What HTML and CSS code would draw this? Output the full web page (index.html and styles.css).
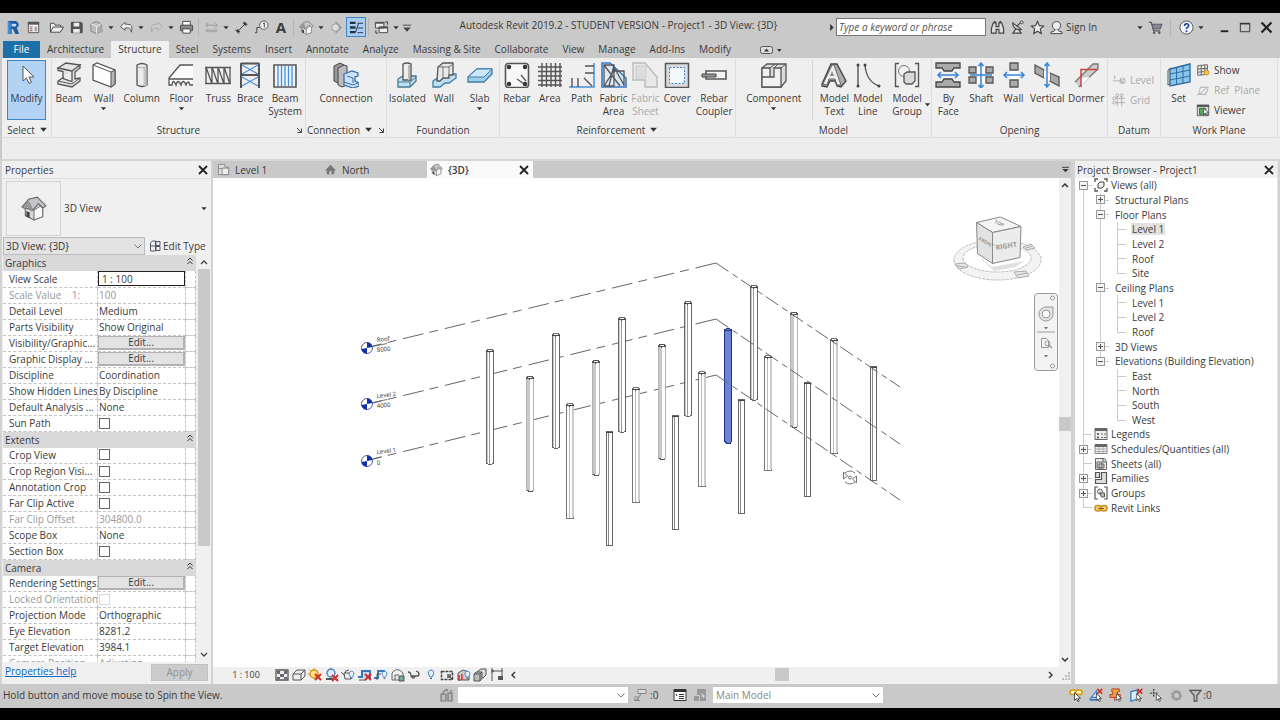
FILE: index.html
```html
<!DOCTYPE html>
<html lang="en">
<head>
<meta charset="utf-8">
<title>Autodesk Revit 2019.2 - STUDENT VERSION - Project1 - 3D View: {3D}</title>
<link rel="stylesheet" href="styles.css">
</head>
<body>
<svg class="defs" aria-hidden="true">
  <defs>
    <symbol id="house" viewBox="0 0 24 24"><path d="M4 12v7l8 4 8-3v-8l-3-5-6-1z" fill="#d8d8dc" stroke="#666" stroke-width="1"/><path d="M12 14l6-4 2 2v8l-8 3z" fill="#f7f7fa" stroke="#777"/><path d="M1 11L7 4l8-2 8 8-3 2-4-4-5 6z" fill="#c4c4ca" stroke="#666"/><path d="M11 14l-4-8-5 6 2 1 2-3 4 5z" fill="#a2a2a8" stroke="#666" stroke-width=".6"/><path d="M5 15l3 1v5l-3-1z" fill="#444"/></symbol>
    <symbol id="caret" viewBox="0 0 8 8"><path d="M1 2.500h6L4 6z" fill="#333"/></symbol>
    <symbol id="chev" viewBox="0 0 10 10"><path d="M1.500 3.500L5 7l3.500-3.500" fill="none" stroke="#777"/></symbol>
    <symbol id="close" viewBox="0 0 12 12"><path d="M2 2l8 8M10 2l-8 8" stroke="#222" stroke-width="1.800"/></symbol>
    <symbol id="launch" viewBox="0 0 8 8"><path d="M2 2l4 4M6.500 2.500v4h-4" fill="none" stroke="#444"/></symbol>
    <symbol id="redx" viewBox="0 0 8 8"><path d="M1 1l6 6M7 1L1 7" stroke="#d22f27" stroke-width="2"/></symbol>
    <symbol id="cursor" viewBox="0 0 10 12"><path d="M1 1v9l2.500-2 1.500 3.500 1.500-.7L5 7.500h3z" fill="#fff" stroke="#333"/></symbol>
    <symbol id="bulb" viewBox="0 0 8 12"><path d="M4 1a3 3 0 0 1 2 5l-1 2H3L2 6a3 3 0 0 1 2-5z" fill="#e8f2fb" stroke="#3b7cc4"/><path d="M3 9.500h2" stroke="#555"/></symbol>
    <symbol id="dbl" viewBox="0 0 8 8"><path d="M1.500 3.500L4 1l2.500 2.500M1.500 7L4 4.500 6.500 7" fill="none" stroke="#333"/></symbol>

    <g id="colA"><path d="M-3.500 1v112l1.500 1h4l1.500-1V1L2-.5h-4z" fill="#fff" stroke="#666"/><path d="M-2.500 2v111" stroke="#ccc"/><path d="M-.5 3v111" stroke="#999"/><path d="M-3.500 1l3 1 4-1" fill="none" stroke="#444"/></g>
    <g id="colB"><path d="M-3.500 1v112l1.500 1h4l1.500-1V1L2-.5h-4z" fill="#fff" stroke="#b4b4b4"/><path d="M-3 2h3v111h-3z" fill="#c8c8c8"/><path d="M-3.500 1L-2-.5h4L3.500 1l-4 1zM-3 113l1.500 1H3" fill="none" stroke="#555"/></g>
    <g id="colC"><path d="M-2.500 1v113h6V1L2 0h-3z" fill="#fff" stroke="#666"/><path d="M-.5 2v112" stroke="#888"/><path d="M-2.500 1l2 1 4-1" fill="none" stroke="#444"/></g>
    <g id="colD"><path d="M-3.500 1v113h7V1L2-.5h-4z" fill="#fff" stroke="#777"/><path d="M-.5 2v112" stroke="#bbb"/><path d="M3 2v111" stroke="#ccc" stroke-width="2"/><path d="M-3.500 1l3 1 4-1" fill="none" stroke="#444"/></g>
    <g id="head"><circle r="5.500" fill="#fff" stroke="#4a62a0"/><path d="M0 0V-5.500A5.500 5.500 0 0 1 5.500-1zM0 0V5.500A5.500 5.500 0 0 1-5.500 1z" fill="#1430a8"/></g>
  </defs>
</svg>

<div class="app">
  <header class="titlebar">
    <nav class="qat" aria-label="Quick access">
      <button class="q" aria-label="Application menu"><svg viewBox="0 0 16 16"><path d="M2 1h8a4 4 0 0 1 1.500 7.500L14 15h-4L7.500 9.500H6V15H2z" fill="#1c5a9c"/><path d="M6 4h3.500a1.300 1.300 0 0 1 0 3H6z" fill="#c8d8ea"/><path d="M2 1l3 2v12H2z" fill="#3e8fd0"/></svg></button>
      <button class="q menu" aria-label="Home"><svg viewBox="0 0 16 16"><path d="M2.500 2.500h11v11h-11z" fill="#f4f4f4" stroke="#555"/><path d="M2 2h12v3H2z" fill="#555"/><path d="M4 7.500h3M4 9.500h3M4 11.500h3" stroke="#8a4a4a"/><path d="M9 7h3v5H9z" fill="#aaa"/></svg></button>
      <button class="q" aria-label="Open"><svg viewBox="0 0 16 16"><path d="M1.500 13V3.500h4l1 2h6v2M1.500 13l3-5.500h11l-3.500 5.500z" fill="#eee" stroke="#444"/></svg></button>
      <button class="q" aria-label="Save"><svg viewBox="0 0 16 16"><path d="M2.500 2.500h10l1.500 1v10H2.500z" fill="#555" stroke="#444"/><path d="M5 3h6v4H5zM4.500 9.500h7v4h-7z" fill="#eee"/></svg></button>
      <button class="q" aria-label="Synchronize"><svg viewBox="0 0 16 16"><path d="M2 4l6-2.500L13 4v7l-5 3.500L2 12z" fill="#bbb" stroke="#888"/><path d="M2 4l6 2.500L13 4M8 6.500v8" fill="none" stroke="#eee"/><circle cx="12" cy="11" r="3" fill="#aaa"/></svg></button>
      <svg class="a"><use href="#caret"/></svg>
      <button class="q" aria-label="Undo"><svg viewBox="0 0 16 16"><path d="M6.500 2.500L1.500 7l5 4V8.500h3.500q3 0 3 4.500 3-8.500-4-8.500H6.500z" fill="#eee" stroke="#555"/></svg></button>
      <svg class="a"><use href="#caret"/></svg>
      <button class="q" aria-label="Redo"><svg viewBox="0 0 16 16"><path d="M9.500 2.500L14.500 7l-5 4V8.500H6q-3 0-3 4.500-3-8.500 4-8.500h2.500z" fill="#ccc" stroke="#aaa"/></svg></button>
      <svg class="a"><use href="#caret"/></svg>
      <button class="q" aria-label="Print"><svg viewBox="0 0 16 16"><path d="M4 6V1.500h8V6" fill="#fff" stroke="#444"/><rect x="1.500" y="5.500" width="13" height="6" rx="1" fill="#888" stroke="#444"/><path d="M4 9.500h8V14H4z" fill="#fff" stroke="#444"/></svg></button>
      <span class="sep"></span>
      <button class="q" aria-label="Measure"><svg viewBox="0 0 16 16"><path d="M2 5.500h12M4 3L2 5.500 4 8M12 3l2 2.500L12 8" fill="none" stroke="#999"/><path d="M2 10h12v3H2z" fill="#aaa"/></svg></button>
      <svg class="a"><use href="#caret"/></svg>
      <button class="q" aria-label="Aligned dimension"><svg viewBox="0 0 16 16"><path d="M3.500 12.500l9-9M1.500 10.500l4 4M10.500 1.500l4 4" stroke="#333"/><path d="M3 9v4h4zM9 3h4v4z" fill="#333"/></svg></button>
      <button class="q" aria-label="Tag"><svg viewBox="0 0 16 16"><circle cx="10.500" cy="5.500" r="4.500" fill="#eee" stroke="#555"/><path d="M9.500 4l1.500-1v5M1 13.500h2V8h3" fill="none" stroke="#444"/></svg></button>
      <button class="q big-a" aria-label="Text">A</button>
      <span class="sep"></span>
      <button class="q" aria-label="Default 3D view"><svg viewBox="0 0 24 24"><use href="#house"/></svg></button>
      <svg class="a"><use href="#caret"/></svg>
      <button class="q" aria-label="Section"><svg viewBox="0 0 16 16"><path d="M7 1l7 7-7 7z" fill="#999"/><circle cx="7" cy="8" r="4" fill="#ddd" stroke="#999"/></svg></button>
      <button class="q on" aria-label="Thin lines"><svg viewBox="0 0 16 16"><path d="M1 3h6M1 8h6M1 13h6" stroke="#234" stroke-width="2.500"/><path d="M9 3.500h6M9 8.500h6M9 13.500h6M7 13l3-9" stroke="#234"/></svg></button>
      <span class="sep"></span>
      <button class="q" aria-label="Switch windows"><svg viewBox="0 0 16 16"><path d="M1.500 2.500h9v6h-9zM5.500 7.500h9v6h-9z" fill="#eee" stroke="#444"/><path d="M1 2h10v2H1zM5 7h10v2H5z" fill="#555"/><path d="M12 2h2.500v3M2 11v3h2" fill="none" stroke="#333"/></svg></button>
      <svg class="a"><use href="#caret"/></svg>
      <button class="q cust" aria-label="Customize"><svg viewBox="0 0 16 16"><path d="M4 5.500h9" stroke="#444"/><path d="M4.500 8h8l-4 4.500z" fill="#444"/></svg></button>
    </nav>
    <h1 class="title">Autodesk Revit 2019.2 - STUDENT VERSION - Project1 - 3D View: {3D}</h1>
    <div class="tools">
      <svg class="a" viewBox="0 0 8 8"><path d="M3 0l4 4-4 4z" fill="#333"/></svg>
      <input class="search" type="text" placeholder="Type a keyword or phrase" aria-label="Search">
      <button class="q" aria-label="Find"><svg viewBox="0 0 16 16"><path d="M3.500 3h3v4h3V3h3l2 6v5h-5v-4h-3v4h-5V9z" fill="#ddd" stroke="#444" stroke-width="1.300"/><path d="M4 1h2v2H4zM10 1h2v2h-2z" fill="#444"/></svg></button>
      <button class="q" aria-label="Communication"><svg viewBox="0 0 16 16"><path d="M3 3c0 6 4 8 9 7zM7 7l4-4M6 10l-3 4h9l-3-4" fill="#ddd" stroke="#444" stroke-width="1.200"/><circle cx="12.500" cy="2.500" r="1.500" fill="#ddd" stroke="#444"/></svg></button>
      <button class="q" aria-label="Favorites"><svg viewBox="0 0 16 16"><path d="M8 1.500l2 4.500 4.500.500-3.500 3 1 5L8 12l-4 2.500 1-5-3.500-3L6 6z" fill="#eee" stroke="#444" stroke-width="1.200"/></svg></button>
      <button class="q signin"><svg viewBox="0 0 16 16"><circle cx="8" cy="6" r="4.300" fill="#eee" stroke="#444"/><path d="M6 10v1.500L2 13v1.500h12V13l-4-1.500V10" fill="#eee" stroke="#444"/></svg>Sign In</button>
      <svg class="a"><use href="#caret"/></svg>
      <button class="q" aria-label="App store"><svg viewBox="0 0 16 16"><path d="M1 2.500h2.500L6 11.500h7" fill="none" stroke="#556" stroke-width="1.300"/><path d="M4 4.500h11L13 9.500H5.500z" fill="#889" stroke="#556"/><circle cx="6.500" cy="13.500" r="1.300" fill="#556"/><circle cx="12" cy="13.500" r="1.300" fill="#556"/></svg></button>
      <span class="sep wide"></span>
      <button class="q" aria-label="Help"><svg viewBox="0 0 16 16"><circle cx="8" cy="8" r="7" fill="#eef1f8" stroke="#555"/><path d="M5.800 6.500q0-2.500 2.300-2.500t2.200 2q0 1-1.300 1.800-1 .6-1 1.700" fill="none" stroke="#1b3f94" stroke-width="1.600"/><circle cx="8" cy="12" r="1" fill="#1b3f94"/></svg></button>
      <svg class="a"><use href="#caret"/></svg>
      <div class="window-buttons">
        <button class="q win" aria-label="Minimize"><svg viewBox="0 0 16 16"><path d="M4 12h8" stroke="#222" stroke-width="2"/></svg></button>
        <button class="q win" aria-label="Maximize"><svg viewBox="0 0 16 16"><path d="M2.500 3.500h10v9h-10z" fill="none" stroke="#333"/><path d="M2 4h11" stroke="#333" stroke-width="1.500"/></svg></button>
        <button class="q win" aria-label="Close"><svg viewBox="0 0 12 12"><use href="#close"/></svg></button>
      </div>
    </div>
  </header>

  <nav class="tabs" aria-label="Ribbon tabs">
    <button class="file">File</button>
    <button>Architecture</button>
    <button class="sel">Structure</button>
    <button>Steel</button>
    <button>Systems</button>
    <button>Insert</button>
    <button>Annotate</button>
    <button>Analyze</button>
    <button>Massing &amp; Site</button>
    <button>Collaborate</button>
    <button>View</button>
    <button>Manage</button>
    <button>Add-Ins</button>
    <button>Modify</button>
    <button class="collapse" aria-label="Minimize ribbon"><svg viewBox="0 0 22 10"><rect x=".5" y="1.500" width="12" height="7" rx="2" fill="#ddd" stroke="#555"/><path d="M4 6.500h5l-2.500-3zM17 4h4.500l-2.200 3z" fill="#333"/></svg></button>
  </nav>

  <div class="ribbon">
    <section class="panel">
      <div class="tools-row c1">
        <button class="rb active"><svg viewBox="0 0 26 26"><path d="M9 4v15l3.500-3 2.500 5.500 2.500-1.200-2.500-5.300h5z" fill="#fff" stroke="#555"/></svg>Modify</button>
      </div>
      <h2>Select <svg><use href="#caret"/></svg></h2>
    </section>

    <section class="panel">
      <div class="tools-row structure">
        <button class="rb"><svg viewBox="0 0 26 26"><path d="M2 6l8-5 14 2-8 6zM2 6v2.500l5 1v7l9 3V9zM16 9l8-6v3l-5 4v7l5-1v3l-8 6-14-3v-3l6-4" fill="#e4e4e4" stroke="#555" stroke-width="1.300"/><path d="M2 19l14 3 8-6" fill="none" stroke="#555"/></svg>Beam</button>
        <button class="rb"><svg viewBox="0 0 26 26"><path d="M2 3l4-2 18 7v14l-4 3-18-7z" fill="#fdfdfd" stroke="#555" stroke-width="1.300"/><path d="M20 10l4-2v14l-4 3z" fill="#b5b5bb" stroke="#555"/><path d="M2 3l18 7" stroke="#555"/></svg>Wall<svg class="dn"><use href="#caret"/></svg></button>
        <button class="rb"><svg viewBox="0 0 26 26"><path d="M8 3q5-3 10 0v20q-5 3-10 0z" fill="#ececec" stroke="#555" stroke-width="1.300"/><path d="M9 5q4 2 8 0" fill="none" stroke="#aaa"/><path d="M14.500 6v18h3V5z" fill="#c4c4c8"/></svg>Column</button>
        <button class="rb"><svg viewBox="0 0 26 26"><path d="M1 17L12 3h13v14l-2 5q-2-6-4 0-2-6-4 0-2-6-4 0-2-6-4 0-2-4-3 0H1z" fill="#fafafa"/><path d="M25 3H12L1 16v7h3q1-7 4 0 2-7 5 0 2-7 5 0 2-6 4 0h3M1 17h24" fill="none" stroke="#555" stroke-width="1.300"/></svg>Floor<svg class="dn"><use href="#caret"/></svg></button>
        <button class="rb"><svg viewBox="0 0 26 26"><path d="M0 5.500h26M0 21.500h26M1 5v17M25 5v17M7 5v17M13 5v17M19 5v17M1 5l6 17M7 5l6 17M13 5l6 17M19 5l6 17" fill="none" stroke="#555" stroke-width="1.300"/></svg>Truss</button>
        <button class="rb"><svg viewBox="0 0 26 26"><path d="M4 1.500h18M4 13h18M4 1v25M22 1v25" stroke="#555" stroke-width="2"/><path d="M5 3l16 9M21 3L5 12M5 15l16 9M21 15L5 24" stroke="#4a90d9" stroke-width="1.300"/></svg>Brace</button>
        <button class="rb"><svg viewBox="0 0 26 26"><path d="M2 3h22v22H2z" fill="#eef5fc" stroke="#555" stroke-width="1.600"/><path d="M6 4v20M9.500 4v20M13 4v20M16.500 4v20M20 4v20" stroke="#4a90d9" stroke-width="1.300"/></svg><span>Beam<br>System</span></button>
      </div>
      <h2>Structure <svg class="corner"><use href="#launch"/></svg></h2>
    </section>

    <section class="panel">
      <div class="tools-row c1">
        <button class="rb"><svg viewBox="0 0 26 26"><path d="M1 4l6-3 4 2v5l-2 1v14l-4-2L1 19z" fill="#999" stroke="#444"/><path d="M5 6l6-3 3 1v19l-5 2-4-2z" fill="#bbb" stroke="#444"/><path d="M11 12l8-3 6 2v3l-3 1v4l4 2v3l-6 2-9-3z" fill="#cfe2f5" stroke="#3a6ea8" stroke-width="1.300"/><path d="M14 14l6 2v5M11 20l9 3 5-2" fill="none" stroke="#3a6ea8"/></svg>Connection</button>
      </div>
      <h2>Connection <svg><use href="#caret"/></svg> <svg class="corner"><use href="#launch"/></svg></h2>
    </section>

    <section class="panel">
      <div class="tools-row foundation">
        <button class="rb"><svg viewBox="0 0 26 26"><path d="M4 17l5-3h13v5l-6 6H4z" fill="#bfe0f3" stroke="#4a7896" stroke-width="1.300"/><path d="M4 20h12l6-5M16 20v5" fill="none" stroke="#4a7896"/><path d="M9 2q4-2 8 0v16H9z" fill="#eee" stroke="#555" stroke-width="1.300"/><path d="M14 3h2v15h-2z" fill="#bbb"/></svg>Isolated</button>
        <button class="rb"><svg viewBox="0 0 26 26"><path d="M2 19l3-2h6l5-5 9 0v4l-7 5h-4l-5 4H2z" fill="#bfe0f3" stroke="#3f7ca6" stroke-width="1.300"/><path d="M7 5l5-4h10v12h-4v3H12l-3 3H6z" fill="#e8e8ea" stroke="#555" stroke-width="1.300"/><path d="M12 4v11M18 4v11M7 5h11l4-3" fill="none" stroke="#777"/></svg>Wall</button>
        <button class="rb"><svg viewBox="0 0 26 26"><path d="M1 15l9-8h15v5l-8 8H1z" fill="#9fcdec" stroke="#3f7ca6" stroke-width="1.300"/><path d="M1 15l9-8h15l-8 8z" fill="#cfe8f8" stroke="#3f7ca6"/></svg>Slab<svg class="dn"><use href="#caret"/></svg></button>
      </div>
      <h2>Foundation</h2>
    </section>

    <section class="panel">
      <div class="tools-row reinforcement">
        <button class="rb"><svg viewBox="0 0 26 26"><rect x="1.500" y="1.500" width="23" height="24" rx="3" fill="#f8f8f8" stroke="#555" stroke-width="1.600"/><g fill="#333"><circle cx="5" cy="5" r="2.200"/><circle cx="21" cy="5" r="2.200"/><circle cx="5" cy="22" r="2.200"/><circle cx="21" cy="22" r="2.200"/></g><path d="M13 17l7 5M17 13l5 6" stroke="#555" stroke-width="1.300"/></svg>Rebar</button>
        <button class="rb"><svg viewBox="0 0 26 26"><path d="M1 5h24M1 9.500h24M1 14h24M1 18.500h24M1 23h24M5 1v24M9.500 1v24M14 1v24M18.500 1v24M23 1v24" stroke="#555" stroke-width="1.400"/></svg>Area</button>
        <button class="rb"><svg viewBox="0 0 26 26"><path d="M0 25h25V1" fill="none" stroke="#4a90d9" stroke-width="1.500"/><path d="M16 4h9M16 11h9M3 16v9M9 16v9M15 16l8 8" stroke="#555" stroke-width="1.400"/></svg>Path</button>
        <button class="rb"><svg viewBox="0 0 26 26"><path d="M1 1h8l16 15v9H1z" fill="#dbe8f6" stroke="#3a7abf" stroke-width="1.600"/><path d="M3 3h10v21H3zM13 9h10v15M3 24L14 7l9 16M3 3l16 21M13 3l-5 21" fill="none" stroke="#555" stroke-width="1.300"/></svg><span>Fabric<br>Area</span></button>
        <button class="rb off" disabled><svg viewBox="0 0 26 26"><path d="M1 1h12l12 14v10H13V18H1z" fill="#e8e8e8" stroke="#bbb" stroke-width="1.400"/><path d="M4 4h10v12H4z" fill="#ddd" stroke="#ccc"/></svg><span>Fabric<br>Sheet</span></button>
        <button class="rb"><svg viewBox="0 0 26 26"><rect x="1.500" y="1.500" width="23" height="24" fill="#dcdcdf" stroke="#555" stroke-width="1.500"/><rect x="5.500" y="5.500" width="15" height="16" fill="#f3f8fd" stroke="#3a86d6" stroke-dasharray="2 1.500"/></svg>Cover</button>
        <button class="rb"><svg viewBox="0 0 26 26"><path d="M5 9h20v8H5z" fill="#f4f4f4" stroke="#555" stroke-width="1.600"/><path d="M1 12h14v3H1z" fill="#999" stroke="#444"/></svg><span>Rebar<br>Coupler</span></button>
      </div>
      <h2>Reinforcement <svg><use href="#caret"/></svg></h2>
    </section>

    <section class="panel">
      <div class="tools-row model">
        <button class="rb ruled"><svg viewBox="0 0 26 26"><path d="M1 6l5-4h19v17l-5 6H1z" fill="#dcdce0" stroke="#555" stroke-width="1.300"/><path d="M1 6h8v9H1zM13 6h7v19H1V15h12z" fill="#f2f2f4" stroke="#555" stroke-width="1.300"/><path d="M9 6l5-4M13 6l4-4M20 6l5-4" stroke="#555"/></svg>Component<svg class="dn"><use href="#caret"/></svg></button>
        <button class="rb text"><svg viewBox="0 0 26 26"><path d="M1 22L10 2h6l9 17-5 6-4-1-2-5H9l-3 6-5-1zM11 14h3l-2-5z" fill="#aaa" stroke="#444" stroke-width="1.300"/><path d="M2 22L11 3h2l7 20h-4l-2-6H8l-2 6z" fill="#eee" stroke="#666"/><path d="M9 14h4l-2-5z" fill="#888"/></svg><span>Model<br>Text</span></button>
        <button class="rb"><svg viewBox="0 0 26 26"><path d="M3 3v21M10 3c1 13 8 19 14 21" fill="none" stroke="#555" stroke-width="1.400"/><g fill="#444"><circle cx="3" cy="3" r="1.500"/><circle cx="3" cy="24" r="1.500"/><circle cx="10" cy="3" r="1.500"/><circle cx="24" cy="24" r="1.500"/></g></svg><span>Model<br>Line</span></button>
        <button class="rb"><svg viewBox="0 0 26 26"><path d="M5 1.500H1.500v23H5M21 1.500h3.500v23H21" fill="none" stroke="#555" stroke-width="1.400"/><circle cx="10" cy="9" r="5.500" fill="#f3f3f3" stroke="#777"/><path d="M10 12l3-2h8v9l-3 3h-6l-2-2z" fill="#d8d8da" stroke="#555" stroke-width="1.300"/></svg><span>Model<br>Group</span><svg class="side"><use href="#caret"/></svg></button>
      </div>
      <h2>Model</h2>
    </section>

    <section class="panel">
      <div class="tools-row opening">
        <button class="rb"><svg viewBox="0 0 26 26"><path d="M1 1h24v5h-6l-2 3H9L7 6H1zM1 25v-5h6l2-3h8l2 3h6v5z" fill="#aaa" stroke="#444" stroke-width="1.300"/><path d="M3 13h20M6 10l-3 3 3 3M20 10l3 3-3 3" fill="none" stroke="#3a86d6" stroke-width="1.500"/></svg><span>By<br>Face</span></button>
        <button class="rb"><svg viewBox="0 0 26 26"><path d="M1 5h7v6H1zM18 5h7v6h-7zM1 15h7v6H1zM18 15h7v6h-7z" fill="#aaa" stroke="#555" stroke-width="1.300"/><path d="M9 5h8v6H9zM9 15h8v6H9z" fill="#fff"/><path d="M13 1v25M2 13h22M10.500 4L13 1l2.500 3M10.500 23l2.500 3 2.500-3" fill="none" stroke="#3a86d6" stroke-width="1.500"/></svg>Shaft</button>
        <button class="rb"><svg viewBox="0 0 26 26"><path d="M9 1h8v7H9zM9 18h8v7H9z" fill="#aaa" stroke="#555" stroke-width="1.300"/><path d="M9 9h8v8H9z" fill="#fff"/><path d="M3 13h20M6 10l-3 3 3 3M20 10l3 3-3 3" fill="none" stroke="#3a86d6" stroke-width="1.500"/></svg>Wall</button>
        <button class="rb"><svg viewBox="0 0 26 26"><path d="M1 3l9 5v8l-9-5zM16 11l9 4v9l-9-5z" fill="#aaa" stroke="#555" stroke-width="1.300"/><path d="M10 8l6 3v8l-6-3z" fill="#fff"/><path d="M13 1v24M10.500 4L13 1l2.500 3M10.500 22l2.500 3 2.500-3" fill="none" stroke="#3a86d6" stroke-width="1.500"/></svg>Vertical</button>
        <button class="rb"><svg viewBox="0 0 26 26"><path d="M2 20L20 2h5v5L6 25" fill="#ccc" stroke="#777" stroke-width="1.300"/><path d="M8 16v8l9-9z" fill="#fff"/><path d="M8 25V7.500h17" fill="none" stroke="#cf4138" stroke-width="1.500"/></svg>Dormer</button>
      </div>
      <h2>Opening</h2>
    </section>

    <section class="panel">
      <div class="stack datum">
        <button class="sm" disabled><svg viewBox="0 0 16 16"><path d="M3 3v4M1 9h9" stroke="#aaa"/><circle cx="12" cy="9" r="3.500" fill="#bbb"/><path d="M12 5.500V9h3.500" stroke="#eee" fill="none"/></svg>Level</button>
        <button class="sm" disabled><svg viewBox="0 0 16 16"><path d="M6 3v12M11 3v12M3 6h12M3 11h12" stroke="#aaa"/><g fill="#eee" stroke="#aaa"><circle cx="6" cy="2.500" r="1.700"/><circle cx="11" cy="2.500" r="1.700"/><circle cx="2.500" cy="6" r="1.700"/><circle cx="2.500" cy="11" r="1.700"/></g></svg>Grid</button>
      </div>
      <h2>Datum</h2>
    </section>

    <section class="panel">
      <div class="tools-row workplane">
        <button class="rb"><svg viewBox="0 0 26 26"><path d="M2 8l3-2v15l-3 2z" fill="#eee" stroke="#555"/><path d="M4 7l20-5v18L4 24z" fill="#8cc3ea" stroke="#2f6ea3" stroke-width="1.400"/><path d="M10.500 5v18M17 4v17M4 12l20-4M4 18l20-4" stroke="#2f6ea3"/></svg>Set</button>
        <div class="stack">
          <button class="sm"><svg viewBox="0 0 16 16"><path d="M2 3l11-1v11L2 14zM2 7l11-1M2 10.500l11-1M6 3v11M10 2v11" fill="#eee" stroke="#555"/><circle cx="12" cy="11" r="2.800" fill="#f6c04a" stroke="#c98d1d"/></svg>Show</button>
          <button class="sm" disabled><svg viewBox="0 0 16 16"><path d="M1 14l4-2 8-8M5 5h9l-3 8H3zM9 14l5-6" fill="none" stroke="#bbb" stroke-width="1.200"/></svg>Ref&nbsp; Plane</button>
          <button class="sm"><svg viewBox="0 0 16 16"><path d="M1.500 2.500h13v12h-13z" fill="#ddd" stroke="#555"/><path d="M1 2h14v2.500H1z" fill="#555"/><path d="M4 6h7v7H4z" fill="#58a65c" stroke="#2c6b35"/><use href="#cursor" x="8" y="5" width="8" height="10"/></svg>Viewer</button>
        </div>
      </div>
      <h2>Work Plane</h2>
    </section>
  </div>
  <div class="options"></div>

  <main class="work">
    <aside class="props">
      <header class="phead"><h2>Properties</h2><button aria-label="Close properties"><svg><use href="#close"/></svg></button></header>
      <button class="type"><span class="thumb"><svg><use href="#house"/></svg></span><span class="tname">3D View</span><svg class="a"><use href="#caret"/></svg></button>
      <div class="inst">
        <span class="combo"><select aria-label="Instance"><option>3D View: {3D}</option></select><svg><use href="#chev"/></svg></span>
        <button class="edit"><svg viewBox="0 0 12 12"><path d="M1.500 3l2-2h3v10h-5zM7 1.500h4v4H7zM7 6.500h4v4H7zM2 6h4" fill="#eef2f8" stroke="#556"/></svg>Edit Type</button>
      </div>
      <div class="grid-area">
        <div class="clip">
        <table>
          <colgroup><col><col class="cv"><col class="cx"></colgroup>
          <tbody>
          <tr><th colspan="3" scope="colgroup"><span>Graphics<svg><use href="#dbl"/></svg></span></th></tr>
          <tr><td><label for="p1">View Scale</label></td><td><input id="p1" class="boxed" type="text" value="1 : 100"></td><td></td></tr>
          <tr class="dim"><td>Scale Value &nbsp;&nbsp; 1:</td><td>100</td><td></td></tr>
          <tr><td>Detail Level</td><td>Medium</td><td></td></tr>
          <tr><td>Parts Visibility</td><td>Show Original</td><td></td></tr>
          <tr><td>Visibility/Graphic...</td><td><button>Edit...</button></td><td></td></tr>
          <tr><td>Graphic Display ...</td><td><button>Edit...</button></td><td></td></tr>
          <tr><td>Discipline</td><td>Coordination</td><td></td></tr>
          <tr><td>Show Hidden Lines</td><td>By Discipline</td><td></td></tr>
          <tr><td>Default Analysis ...</td><td>None</td><td></td></tr>
          <tr><td><label for="p2">Sun Path</label></td><td><input id="p2" type="checkbox"></td><td></td></tr>
          </tbody>
          <tbody>
          <tr><th colspan="3" scope="colgroup"><span>Extents<svg><use href="#dbl"/></svg></span></th></tr>
          <tr><td><label for="p3">Crop View</label></td><td><input id="p3" type="checkbox"></td><td></td></tr>
          <tr><td><label for="p4">Crop Region Visi...</label></td><td><input id="p4" type="checkbox"></td><td></td></tr>
          <tr><td><label for="p5">Annotation Crop</label></td><td><input id="p5" type="checkbox"></td><td></td></tr>
          <tr><td><label for="p6">Far Clip Active</label></td><td><input id="p6" type="checkbox"></td><td></td></tr>
          <tr class="dim"><td>Far Clip Offset</td><td>304800.0</td><td></td></tr>
          <tr><td>Scope Box</td><td>None</td><td></td></tr>
          <tr><td><label for="p7">Section Box</label></td><td><input id="p7" type="checkbox"></td><td></td></tr>
          </tbody>
          <tbody>
          <tr><th colspan="3" scope="colgroup"><span>Camera<svg><use href="#dbl"/></svg></span></th></tr>
          <tr><td>Rendering Settings</td><td><button>Edit...</button></td><td></td></tr>
          <tr class="dim"><td><label for="p8">Locked Orientation</label></td><td><input id="p8" type="checkbox" disabled></td><td></td></tr>
          <tr><td>Projection Mode</td><td>Orthographic</td><td></td></tr>
          <tr><td>Eye Elevation</td><td>8281.2</td><td></td></tr>
          <tr><td>Target Elevation</td><td>3984.1</td><td></td></tr>
          <tr class="dim"><td>Camera Position</td><td>Adjusting</td><td></td></tr>
          </tbody>
        </table>
        </div>
        <div class="vscroll">
          <svg viewBox="0 0 12 12"><path d="M3 8l3-3 3 3" fill="none" stroke="#444" stroke-width="1.300"/></svg>
          <span class="track"><span class="knob props-knob"></span></span>
          <svg viewBox="0 0 12 12"><path d="M3 4l3 3 3-3" fill="none" stroke="#444" stroke-width="1.300"/></svg>
        </div>
      </div>
      <footer class="pfoot"><a href="#help">Properties help</a><button disabled>Apply</button></footer>
    </aside>

    <section class="view">
      <div class="vtabs">
        <button><svg viewBox="0 0 14 14"><path d="M1.500 1.500h7v3h4v8h-11z" fill="#ddd" stroke="#888"/><path d="M5.500 5.500h7v7h-7zM1.500 6h4" fill="#eee" stroke="#888"/></svg>Level 1</button>
        <button><svg viewBox="0 0 14 14"><path d="M1 8l6-6 6 6h-2v4H3V8z" fill="#777"/><path d="M6 9h2v3H6z" fill="#ddd"/></svg>North</button>
        <button class="cur"><svg viewBox="0 0 24 24"><use href="#house"/></svg>{3D}<svg class="x"><use href="#close"/></svg></button>
        <svg class="more" viewBox="0 0 8 8"><path d="M0 1.500h8" stroke="#333"/><path d="M.5 3.500h7L4 7z" fill="#333"/></svg>
      </div>
      <div class="canvas-row">
        <div class="canvas">
          <svg class="scene" viewBox="213 178 846 489" role="img" aria-label="3D structural view">
            <g class="lv left"><path d="M716 263L373 346"/><path d="M716 319L373 403"/><path d="M716 375L373 459"/></g>
            <g shape-rendering="crispEdges">
              <use href="#colA" x="490" y="350"/><use href="#colA" x="556" y="334"/><use href="#colA" x="622" y="318"/><use href="#colA" x="688" y="302"/><use href="#colA" x="754" y="286"/>
              <use href="#colB" x="530" y="377"/><use href="#colB" x="596" y="361"/><use href="#colB" x="662" y="345"/><use href="#colB" x="794" y="313"/>
              <use href="#colD" x="570" y="404"/><use href="#colD" x="636" y="388"/><use href="#colD" x="702" y="372"/><use href="#colD" x="768" y="356"/><use href="#colD" x="834" y="339"/>
              <use href="#colC" x="609" y="431"/><use href="#colC" x="675" y="415"/><use href="#colC" x="741" y="399"/><use href="#colC" x="807" y="382"/><use href="#colC" x="873" y="366"/>
              <path d="M724.500 330v111l2 2h4l1-2V330l-2-1.500h-3z" fill="#6b84d6" stroke="#22358c"/><path d="M725 330h6" stroke="#22358c"/>
            </g>
            <g class="lv right"><path d="M716 263l184 124"/><path d="M716 319l184 125"/><path d="M716 375l184 125"/></g>
            <use href="#head" x="367" y="348"/><use href="#head" x="367" y="404"/><use href="#head" x="367" y="461"/>
            <path d="M373 346.500l14-3M373 402.500l14-3M373 459l8-2" stroke="#555" stroke-width=".8"/>
            <g class="ltext"><text x="377" y="342" transform="rotate(-6 377 342)">Roof</text><text x="377" y="352" transform="rotate(-6 377 352)">8000</text>
            <text x="377" y="398" transform="rotate(-6 377 398)">Level 2</text><text x="377" y="408" transform="rotate(-6 377 408)">4000</text>
            <text x="377" y="454" transform="rotate(-6 377 454)">Level 1</text><text x="377" y="465" transform="rotate(-6 377 465)">0</text></g>
            <g fill="none" stroke="#777"><path d="M845 473q5-4 10 0M855 482q-5 4-10 0"/><circle cx="850" cy="477.500" r="1.500"/><path d="M843.500 472v7l4-3zM856.500 483v-7l-4 3z" fill="#fff"/></g>
          </svg>
          <svg class="cube" viewBox="950 210 96 74" role="img" aria-label="View cube">
            <path d="M954 260a43.500 20 0 1 0 87 0a43.500 20 0 1 0-87 0zM963 258a34 14 0 1 0 68 0a34 14 0 1 0-68 0z" fill="#f3f3f3" fill-rule="evenodd" stroke="#bbb" stroke-dasharray="3 1"/>
            <path d="M978 256l14 11 32-6-8 6-22 4z" fill="#ccc" opacity=".6"/>
            <path d="M976.500 222.500l24-5.500 20.500 9.500-28.500 6z" fill="#f5f5f5" stroke="#888"/><path d="M976.500 222.500l16 10v31l-15-10z" fill="#e2e2e2" stroke="#888"/><path d="M992.500 232.500l28.500-6-1 31-27.500 6z" fill="#ececec" stroke="#888"/>
            <g class="cubetext"><text x="996" y="250" transform="rotate(-9 996 250)">RIGHT</text><text class="s" x="978" y="240" transform="rotate(28 978 240)">FRONT</text><text class="s" x="994" y="223" transform="rotate(24 994 223)">TOP</text></g>
            <g fill="#e6e6e6" stroke="#aaa"><path d="M955 264l10-1 3 4-9 2zM1014 272l12-1 3 5-11 2zM1023 247l8-3 4 4-8 2z"/><path d="M957 266l8 1M1017 275l10-2M1026 248l6-2"/></g>
          </svg>
          <div class="navbar">
            <svg viewBox="0 0 24 78"><rect x=".5" y=".5" width="23" height="77" rx="3" fill="#f3f3f3" stroke="#999"/><g fill="none" stroke="#999"><circle cx="18.500" cy="5" r="2"/><circle cx="18.500" cy="73" r="2"/><path d="M12 14h7v7a7 7 0 1 1-7-7z" fill="#e4e4e4"/><circle cx="12" cy="21" r="4" fill="#f7f7f7"/><path d="M3 39h18M7.500 45.500h5l2 2v7h-7z"/><circle cx="13.500" cy="50.500" r="2.500"/><path d="M15 52l3 3" stroke-width="1.500"/></g><path d="M10 34h4l-2 2.500zM10 62h4l-2 2.500z" fill="#777"/></svg>
          </div>
        </div>
        <div class="vscroll wide">
          <svg viewBox="0 0 12 12"><path d="M3 8l3-3 3 3" fill="none" stroke="#333" stroke-width="1.500"/></svg>
          <span class="track"><span class="knob view-knob"></span></span>
          <svg viewBox="0 0 12 12"><path d="M3 4l3 3 3-3" fill="none" stroke="#333" stroke-width="1.500"/></svg>
        </div>
      </div>
      <div class="vbar">
        <button class="scale">1 : 100</button>
        <button aria-label="Detail level"><svg viewBox="0 0 14 14"><path d="M1 2h12v10H1z" fill="#eee" stroke="#555" stroke-width="1.300"/><path d="M2 3h3v3H2zM9 3h3v3H9zM5 6h4v3H5zM2 9h3v2H2zM9 9h3v2H9z" fill="#667"/></svg></button>
        <button aria-label="Visual style"><svg viewBox="0 0 14 14"><path d="M1 6l4-4h8v6l-4 4H1zM1 6h8v6M9 6l4-4" fill="#eee" stroke="#555"/></svg></button>
        <button aria-label="Sun path"><svg viewBox="0 0 14 14"><circle cx="6" cy="6" r="4" fill="#ffe08a" stroke="#d89b1c" stroke-width="1.500"/><path d="M6 0v2M0 6h2M1.500 1.500l1.500 1.500M10 2L9 3" stroke="#d89b1c"/><use href="#redx" x="6" y="5" width="8" height="8"/></svg></button>
        <button aria-label="Shadows"><svg viewBox="0 0 14 14"><circle cx="6" cy="5" r="4" fill="#dde9f5" stroke="#4a7ebb" stroke-width="1.300"/><path d="M1 11h7" stroke="#555" stroke-width="2"/><use href="#redx" x="6" y="6" width="8" height="8"/></svg></button>
        <button aria-label="Rendering"><svg viewBox="0 0 14 14"><path d="M3 5h6l1 6H4zM0 4l4 4M4 5q0-3 4-3" fill="#eee" stroke="#555"/><use href="#bulb" x="7" y="2" width="7" height="11"/></svg></button>
        <button aria-label="Crop view"><svg viewBox="0 0 14 14"><path d="M0 9h4V3h8v8" fill="#c9dcf0" stroke="#3b76b5" stroke-width="2"/><path d="M1 12h7" stroke="#555"/><use href="#redx" x="6" y="5" width="8" height="8"/></svg></button>
        <button aria-label="Show crop region"><svg viewBox="0 0 14 14"><path d="M0 10h4V3h7" fill="none" stroke="#3b76b5" stroke-width="2"/><path d="M3 12V6h4" fill="none" stroke="#555"/><use href="#bulb" x="7" y="2" width="7" height="11"/></svg></button>
        <button aria-label="Lock view"><svg viewBox="0 0 14 14"><path d="M1 12V5q5-7 11 0v7zM4 12V7h4" fill="#eee" stroke="#666"/><path d="M8 8h5v5H8z" fill="#7a9" stroke="#555"/></svg></button>
        <button aria-label="Temporary hide"><svg viewBox="0 0 14 14"><path d="M1 4q3 0 3 4 3 4 4 0h3q2-2 0-4l-2-1M4 8l4 0" fill="none" stroke="#555" stroke-width="1.300"/></svg></button>
        <button aria-label="Reveal hidden"><svg viewBox="0 0 14 14"><use href="#bulb" x="3" y="1" width="8" height="12"/></svg></button>
        <button aria-label="Temporary properties"><svg viewBox="0 0 14 14"><path d="M1.500 3.500h11v8h-11z" fill="#eee" stroke="#444" stroke-width="1.500" stroke-dasharray="3 1"/><path d="M7 6h4v4H7z" fill="#777"/><path d="M9 8l4 4" stroke="#444"/></svg></button>
        <button aria-label="Analytical model"><svg viewBox="0 0 14 14"><path d="M1 5l5-3 6 2v8H1z" fill="#ccc" stroke="#555"/><path d="M2 7v6M5 6v6" stroke="#c33" stroke-width="1.500"/><use href="#bulb" x="7" y="2" width="7" height="11"/></svg></button>
        <button aria-label="Displacement"><svg viewBox="0 0 14 14"><path d="M5 3l3-2h5v6l-3 3H5z" fill="#ddd" stroke="#555"/><path d="M1 6l2-2h6v6l-2 3H1zM1 6h6v7M7 6l2-2" fill="#bbb" stroke="#555"/></svg></button>
        <button aria-label="Constraints"><svg viewBox="0 0 14 14"><path d="M1 3h12M2 0v13M12 0v8" stroke="#555"/><path d="M8 8h5v4H8z" fill="#555"/><path d="M4 3l-2-1.500M4 3L2 4.500" stroke="#555"/></svg></button>
        <button aria-label="Scroll left"><svg viewBox="0 0 14 14"><path d="M9 4L6 7l3 3" fill="none" stroke="#333" stroke-width="1.400"/></svg></button>
        <span class="hscroll"><span class="knob"></span></span>
        <button aria-label="Scroll right"><svg viewBox="0 0 14 14"><path d="M5 4l3 3-3 3" fill="none" stroke="#333" stroke-width="1.400"/></svg></button>
        <svg class="grip" viewBox="0 0 12 14"><path d="M9 4h2v2H9zM6 7h2v2H6zM9 7h2v2H9zM3 10h2v2H3zM6 10h2v2H6zM9 10h2v2H9z" fill="#bbb"/></svg>
      </div>
    </section>

    <aside class="browser">
      <header class="phead"><h2>Project Browser - Project1</h2><button aria-label="Close browser"><svg><use href="#close"/></svg></button></header>
      <ul class="tree">
        <li><i class="c first"><b class="minus"></b></i><svg viewBox="0 0 14 14"><path d="M4 1H1v3M10 1h3v3M4 13H1v-3M10 13h3v-3" fill="none" stroke="#555" stroke-width="1.300"/><path d="M4 6l2-2h4v4l-2 2H4z" fill="#eee" stroke="#444"/></svg>Views (all)</li>
        <li><i class="v"></i><i class="c"><b class="plus"></b></i><span>Structural Plans</span></li>
        <li><i class="v"></i><i class="c"><b class="minus"></b></i><span>Floor Plans</span></li>
        <li><i class="v"></i><i class="v"></i><i class="c"></i><span class="hit">Level 1</span></li>
        <li><i class="v"></i><i class="v"></i><i class="c"></i><span>Level 2</span></li>
        <li><i class="v"></i><i class="v"></i><i class="c"></i><span>Roof</span></li>
        <li><i class="v"></i><i class="v"></i><i class="c last"></i><span>Site</span></li>
        <li><i class="v"></i><i class="c"><b class="minus"></b></i><span>Ceiling Plans</span></li>
        <li><i class="v"></i><i class="v"></i><i class="c"></i><span>Level 1</span></li>
        <li><i class="v"></i><i class="v"></i><i class="c"></i><span>Level 2</span></li>
        <li><i class="v"></i><i class="v"></i><i class="c last"></i><span>Roof</span></li>
        <li><i class="v"></i><i class="c"><b class="plus"></b></i><span>3D Views</span></li>
        <li><i class="v"></i><i class="c last"><b class="minus"></b></i><span>Elevations (Building Elevation)</span></li>
        <li><i class="v"></i><i></i><i class="c"></i><span>East</span></li>
        <li><i class="v"></i><i></i><i class="c"></i><span>North</span></li>
        <li><i class="v"></i><i></i><i class="c"></i><span>South</span></li>
        <li><i class="v"></i><i></i><i class="c last"></i><span>West</span></li>
        <li><i class="c"></i><svg viewBox="0 0 14 14"><path d="M1 1.500h12v11H1z" fill="#eee" stroke="#666"/><path d="M1 1h12v3H1zM3 6h2v2H3zM3 9.500h2v2H3z" fill="#666"/><path d="M7 7h5M7 10.500h5" stroke="#666" stroke-dasharray="2 1"/></svg>Legends</li>
        <li><i class="c"><b class="plus"></b></i><svg viewBox="0 0 14 14"><path d="M1 2.500h12v9H1z" fill="#f4f4f4" stroke="#888"/><path d="M1 2h12v3H1z" fill="#666"/><path d="M1 7h12M1 9.500h12M5 5v6M9 5v6" stroke="#aaa"/></svg>Schedules/Quantities (all)</li>
        <li><i class="c"></i><svg viewBox="0 0 14 14"><path d="M1.500 1.500h9l2 3v8h-11z" fill="#eee" stroke="#666"/><path d="M3 5h5v6H3zM9 2v3h3M5 7h5v4H5z" fill="#ccc" stroke="#666"/></svg>Sheets (all)</li>
        <li><i class="c"><b class="plus"></b></i><svg viewBox="0 0 14 14"><path d="M1.500 1.500h4v5h-4zM7.500 1.500h5v11h-11v-4h6z" fill="#ddd" stroke="#555" stroke-width="1.200"/></svg>Families</li>
        <li><i class="c"><b class="plus"></b></i><svg viewBox="0 0 14 14"><path d="M4 1H1v12h3M10 1h3v12h-3" fill="none" stroke="#555" stroke-width="1.200"/><circle cx="6" cy="5.500" r="2.500" fill="#ddd" stroke="#666"/><path d="M5.500 7h5v4h-3z" fill="#bbb" stroke="#555"/></svg>Groups</li>
        <li><i class="c last"></i><svg viewBox="0 0 14 14"><g fill="#f0cf7a" stroke="#c8932a" stroke-width="1.600"><rect x="1" y="4.500" width="6" height="5.500" rx="2.500"/><rect x="7" y="4.500" width="6" height="5.500" rx="2.500"/></g><path d="M4 7.500h6" stroke="#8c6212"/></svg>Revit Links</li>
      </ul>
    </aside>
  </main>

  <footer class="status">
    <span class="msg">Hold button and move mouse to Spin the View.</span>
    <svg class="si" viewBox="0 0 14 14"><path d="M1 6h5v7H1zM8 5h4v8H8zM3 6q0-4 4-4M6 1l2 2M11 2v3" fill="#bbb" stroke="#777" stroke-width="1.200"/></svg>
    <span class="combo"><select aria-label="Workset" disabled><option></option></select><svg><use href="#chev"/></svg></span>
    <svg class="si ed" viewBox="0 0 14 14"><path d="M5 1.500h8v4H5zM8 6l-5 7M1 12.500h6M2 9h3v3H2z" fill="#ddd" stroke="#888"/></svg>
    <span class="count">:0</span>
    <svg class="si opt" viewBox="0 0 14 14"><path d="M1 1.500h12v11H1z" fill="#fff" stroke="#333"/><path d="M1 1h12v3H1z" fill="#333"/><path d="M6 6.500h5M6 8.500h5M6 10.500h5M3 6l1 2" stroke="#333"/></svg>
    <svg class="si opt" viewBox="0 0 14 14"><path d="M1 8h5v5H1zM4 1h9v12H7V7H4z" fill="#999"/><path d="M8 5l2 5 2-2z" fill="#ddd"/></svg>
    <span class="combo"><select aria-label="Design option" disabled><option>Main Model</option></select><svg><use href="#chev"/></svg></span>
    <div class="sel-tools">
      <button aria-label="Select links"><svg viewBox="0 0 16 16"><rect x="1" y="2" width="7" height="5" rx="2.500" fill="#fff0b0" stroke="#d19a12" stroke-width="1.600"/><rect x="7" y="2" width="7" height="5" rx="2.500" fill="#fff0b0" stroke="#d19a12" stroke-width="1.600"/><use href="#cursor" x="5" y="4" width="9" height="11"/></svg></button>
      <button aria-label="Select underlay"><svg viewBox="0 0 16 16"><path d="M1 12l7-9v9zM2 10h10M1 13h10" fill="#e8f0fa" stroke="#3b7cc4" stroke-width="1.200"/><use href="#redx" x="8" y="0" width="7" height="7"/><use href="#cursor" x="7" y="5" width="8" height="10"/></svg></button>
      <button aria-label="Select pinned"><svg viewBox="0 0 16 16"><path d="M3 1h8v3h-2v3h3v3H1V7h3V4H3zM6 10v4" fill="#f0a53a" stroke="#c03a22"/><use href="#cursor" x="7" y="5" width="8" height="10"/></svg></button>
      <button aria-label="Select by face"><svg viewBox="0 0 16 16"><path d="M2 4l7-2v10l-7 2z" fill="#dfeefb" stroke="#3b7cc4" stroke-width="1.400"/><use href="#redx" x="8" y="0" width="7" height="7"/><use href="#cursor" x="7" y="5" width="8" height="10"/></svg></button>
      <button aria-label="Drag on selection"><svg viewBox="0 0 16 16"><path d="M5 1v9M1 5.500h9" stroke="#444" stroke-width="1.500" stroke-dasharray="2 1"/><use href="#cursor" x="7" y="5" width="8" height="10"/></svg></button>
      <button aria-label="Background processes"><svg viewBox="0 0 16 16"><circle cx="8" cy="8" r="4" fill="none" stroke="#999" stroke-width="2.500"/><circle cx="8" cy="8" r="6" fill="none" stroke="#aaa" stroke-dasharray="2 2"/></svg></button>
      <button class="filter"><svg viewBox="0 0 16 16"><path d="M2 2.500h12L9.500 8v6h-3V8z" fill="#bbb" stroke="#555" stroke-width="1.300"/></svg>:0</button>
    </div>
  </footer>
</div>
</body>
</html>
```

FILE: styles.css
```css
* { box-sizing: border-box; }
body { margin: 0; background: #000; color: #3a3a3a; font: 10px/12px "Open Sans", "Noto Sans", sans-serif; }
button { margin: 0; padding: 0; border: 0; background: none; color: inherit; font: inherit; }
h1, h2 { margin: 0; font: inherit; }
ul { margin: 0; padding: 0; list-style: none; }
svg { flex: none; }
.defs { position: absolute; width: 0; height: 0; }
.app { display: flex; flex-direction: column; height: 100vh; padding: 13px 0 12px; }

/* title bar */
.titlebar { display: flex; align-items: center; height: 28px; padding: 0 3px; background: #c9c9c9; }
.qat, .tools, .window-buttons { display: flex; align-items: center; }
.window-buttons { margin-left: 8px; }
.q { display: flex; align-items: center; justify-content: center; width: 20px; height: 20px; }
.q svg { width: 15px; height: 15px; }
.q.menu { margin-right: 3px; }
.q.on { background: #a9cdf3; border: 1px solid #3f85c9; }
.q.cust { width: 10px; }
.big-a { font: bold 15px/18px "Open Sans", sans-serif; }
.a { width: 10px; height: 7px; }
.sep { width: 1px; height: 18px; margin: 0 2px; background: #b4b4b4; }
.sep.wide { margin: 0 5px; }
.title { flex: 1; padding-bottom: 4px; text-align: center; white-space: nowrap; }
.search { width: 150px; height: 18px; margin-right: 1px; padding: 0 2px; border: 1px solid #777; background: #fff; font: italic 10px/14px "Open Sans", sans-serif; }
.search::placeholder { color: #555; opacity: 1; }
.q.signin { width: 84px; gap: 2px; justify-content: flex-start; padding-left: 2px; margin-right: 4px; }
.q.win { width: 21px; }

/* ribbon tabs */
.tabs { display: flex; height: 17px; padding-left: 3px; background: #c9c9c9; }
.tabs button { padding: 0 7px 2px; white-space: nowrap; }
.tabs .file { width: 37px; background: #1d6fa8; color: #fff; }
.tabs .sel { background: #efefef; }
.tabs .collapse { padding: 0 0 0 22px; }
.collapse svg { display: block; width: 22px; height: 10px; }

/* ribbon */
.ribbon { display: grid; grid-template-columns: 48fr 254fr 81fr 113fr 236fr 196fr 176fr 53fr 117fr; height: 80px; padding: 0 2px; background: #efefef; border-left: 2px solid #c9c9c9; border-bottom: 1px solid #dedede; }
.panel { display: flex; flex-direction: column; min-width: 0; border-right: 1px solid #dedede; }
.panel h2 { display: flex; align-items: center; justify-content: center; gap: 4px; height: 15px; }
.panel h2 svg { width: 9px; height: 9px; }
.panel h2 .corner { width: 8px; height: 8px; }
.panel:nth-child(2) h2 { display: grid; grid-template-columns: 1fr auto 1fr; }
.panel:nth-child(2) h2::before { content: ""; }
.panel:nth-child(2) .corner { justify-self: end; margin-right: 2px; }
.tools-row { display: grid; flex: 1; min-height: 0; padding-top: 2px; }
.c1 { grid-template-columns: 1fr; }
.structure { grid-template-columns: 34fr 36fr 40fr 40fr 34fr 30fr 40fr; }
.foundation { grid-template-columns: 41fr 33fr 39fr; }
.reinforcement { grid-template-columns: 34fr 32fr 32fr 32fr 32fr 32fr 42fr; }
.model { grid-template-columns: 77fr 40fr 31fr 48fr; }
.opening { grid-template-columns: 33fr 33fr 32fr 36fr 42fr; }
.workplane { grid-template-columns: 35fr 81fr; }
.rb { display: flex; flex-direction: column; align-items: center; justify-content: flex-start; position: relative; min-width: 0; height: 60px; padding-top: 2px; line-height: 13px; text-align: center; white-space: nowrap; }
.rb > svg:first-child { width: 26px; height: 26px; margin-bottom: 4px; }
.rb .dn { width: 7px; height: 7px; }
.rb .side { position: absolute; right: 0; bottom: 12px; width: 7px; height: 7px; }
.rb.active { margin: 0 5px 0 3px; padding-top: 1px; background: #b3d3f4; border: 1px solid #3f85c9; }
.rb.text { padding-left: 4px; }
.rb.off, .sm:disabled { color: #aaa; }
.rb.ruled { border-right: 1px solid #d4d4d4; }
.stack { display: flex; flex-direction: column; flex: 1; }
.sm { display: flex; align-items: center; gap: 4px; height: 20px; white-space: nowrap; }
.sm svg { width: 14px; height: 14px; }
.datum { padding: 12px 0 0 4px; }
.options { height: 23px; background: #ededed; border-left: 2px solid #c9c9c9; border-bottom: 2px solid #d6d6d6; }

/* work area */
.work { display: flex; flex: 1; min-height: 0; background: #d2d2d2; padding: 0 2px; }
.props { display: flex; flex-direction: column; width: 209px; padding-left: 1px; background: #f0f0f0; }
.phead { display: flex; align-items: center; justify-content: space-between; height: 17px; padding: 0 2px; background: #f0f0f0; }
.phead button, .phead svg { display: block; width: 12px; height: 12px; }
.type { display: flex; align-items: center; height: 59px; padding: 0 2px 0 3px; border-top: 1px solid #ddd; text-align: left; }
.thumb { display: grid; place-items: center; width: 55px; height: 55px; border: 1px solid #d2d2d2; }
.thumb svg { width: 26px; height: 26px; }
.tname { flex: 1; padding-left: 3px; }
.combo { display: grid; align-items: center; }
.combo > * { grid-area: 1 / 1; }
.combo select { appearance: none; width: 100%; height: 16px; padding: 0 3px; border: 0; border-radius: 0; background: #fff; color: #888; font: inherit; opacity: 1; }
.combo svg { width: 10px; height: 10px; margin-right: 2px; justify-self: end; pointer-events: none; }
.inst { display: flex; height: 18px; }
.inst .combo { width: 142px; }
.inst select { height: 18px; padding: 0 2px; border: 1px solid #bbb; background: #e3e3e3; color: #333; }
.edit { display: flex; align-items: center; gap: 2px; padding-left: 4px; }
.edit svg { width: 12px; height: 12px; }
.grid-area { display: flex; flex: 1; min-height: 0; }
.clip { flex: 1; overflow: hidden; background: #fff; }
table { width: 100%; table-layout: fixed; border-collapse: collapse; }
.cv { width: 88px; }
.cx { width: 10px; }
tr { height: 16px; }
td { height: 16px; padding: 0 0 1px 1px; border-right: 1px dashed #c4c4c4; border-bottom: 1px dashed #c4c4c4; white-space: nowrap; overflow: hidden; line-height: 12px; }
td:first-child { padding-left: 6px; }
th { height: 16px; padding: 0 2px; background: #d9d9d9; text-align: left; font-weight: 400; }
th span { display: flex; justify-content: space-between; }
th svg { width: 8px; height: 8px; }
.dim { color: #999; }
td button { display: block; width: 87px; height: 14px; margin-left: -1px; border: 1px solid #b2b2b2; border-width: 1px 2px 2px 1px; background: #e2e2e2; line-height: 11px; }
td input { display: block; margin: 0; appearance: none; background: #fff; }
td input[type=checkbox] { width: 11px; height: 11px; border: 1px solid #666; }
td input:disabled { opacity: .25; }
td .boxed { width: 87px; height: 15px; margin-left: -1px; padding: 0 3px; border: 1px solid #222; font: inherit; color: inherit; }
.vscroll { display: flex; flex-direction: column; align-items: center; width: 15px; background: #f0f0f0; }
.vscroll.wide { width: 12px; }
.vscroll svg { width: 12px; height: 14px; }
.track { flex: 1; width: 12px; display: flex; flex-direction: column; }
.knob { background: #c9c9c9; }
.props-knob { height: 73%; }
.view-knob { height: 14px; margin-top: auto; margin-bottom: 222px; }
.pfoot { display: flex; justify-content: space-between; align-items: center; height: 22px; padding: 0 3px 2px 2px; }
.pfoot a { color: #0b66c3; padding-bottom: 2px; }
.pfoot button { width: 57px; height: 17px; background: #ccc; border: 1px solid #c2c2c2; color: #8f8f8f; }

/* view */
.view { display: flex; flex-direction: column; flex: 1; min-width: 0; margin: 0 4px 0 2px; background: #fff; }
.vtabs { display: flex; align-items: center; height: 17px; padding-right: 2px; background: #c9c9c9; }
.vtabs button { display: flex; align-items: center; gap: 5px; width: 107px; height: 17px; padding-left: 4px; }
.vtabs button svg { width: 13px; height: 13px; }
.vtabs .cur { width: 106px; padding: 0 3px; background: #fafafa; font-weight: 600; }
.cur svg.x { width: 12px; height: 12px; margin-left: auto; }
.more { width: 7px; height: 7px; margin-left: auto; }
.canvas-row { display: flex; flex: 1; min-height: 0; }
.canvas { position: relative; flex: 1; min-width: 0; }
.scene { display: block; width: 100%; height: 100%; }
.lv { fill: none; stroke: #666; stroke-width: 1; }
.left { stroke-dasharray: 21 7 9 6; }
.right { stroke-dasharray: 15 5 6 4; }
.ltext { font-size: 6px; fill: #333; }
.cube { position: absolute; top: 32px; right: 13px; width: 96px; height: 74px; }
.cubetext { font: bold 7px "Open Sans", sans-serif; fill: #999; }
.cubetext .s { font-size: 5px; }
.navbar { position: absolute; top: 115px; right: 1px; width: 24px; height: 78px; }
.navbar svg { display: block; }
.vbar { display: flex; align-items: center; height: 17px; padding-bottom: 2px; background: #f0f0f0; }
.vbar button { width: 17px; height: 15px; flex: none; }
.vbar button:nth-of-type(even) { width: 16px; }
.vbar .scale { width: 61px; padding-left: 5px; font-size: 9px; }
.vbar button svg { display: block; width: 14px; height: 14px; margin: auto; }
.hscroll { flex: 1; display: flex; justify-content: center; height: 13px; }
.hscroll .knob { width: 14px; }
.grip { width: 12px; height: 14px; }

/* project browser */
.browser { width: 203px; background: #fff; border-right: 1px solid #e4e4e4; }
.tree { display: flex; flex-direction: column; height: 337px; }
.tree li { display: flex; align-items: center; flex: 1; min-height: 0; white-space: nowrap; }
.tree i { display: grid; place-items: center; width: 17px; height: 100%; background: none no-repeat; }
.tree .v { background-image: linear-gradient(#ccc, #ccc); background-size: 1px 100%; background-position: 8px 0; }
.tree .c { background-image: linear-gradient(#ccc, #ccc), linear-gradient(#ccc, #ccc); background-size: 1px 100%, 9px 1px; background-position: 8px 0, 8px 7px; }
.tree .c.last { background-size: 1px 8px, 9px 1px; }
.tree .c.first { background-size: 1px 7px, 9px 1px; background-position: 8px 8px, 8px 7px; }
.tree b { width: 9px; height: 9px; border: 1px solid #999; background: linear-gradient(#555, #555) center / 5px 1px no-repeat, #f4f4f4; }
.tree .plus { background: linear-gradient(#555, #555) center / 5px 1px no-repeat, linear-gradient(#555, #555) center / 1px 5px no-repeat, #f4f4f4; }
.tree svg { width: 14px; height: 14px; margin: 0 3px 0 2px; }
.tree span { margin-left: 5px; padding: 0 1px; }
.tree .hit { background: #e2e2e2; }

/* status bar */
.status { display: flex; align-items: center; height: 24px; padding: 0 66px 2px 3px; background: #c9c9c9; }
.msg { width: 437px; }
.si { width: 14px; height: 14px; margin-right: 4px; }
.si.opt { margin-right: 6px; }
.status .combo { width: 170px; }
.si.ed { margin-left: 5px; margin-right: 3px; }
.count { width: 23px; }
.sel-tools { display: flex; margin-left: auto; }
.sel-tools button { display: flex; align-items: center; justify-content: center; width: 20px; }
.sel-tools svg { width: 15px; height: 15px; }
.sel-tools .filter { width: 28px; }
```
